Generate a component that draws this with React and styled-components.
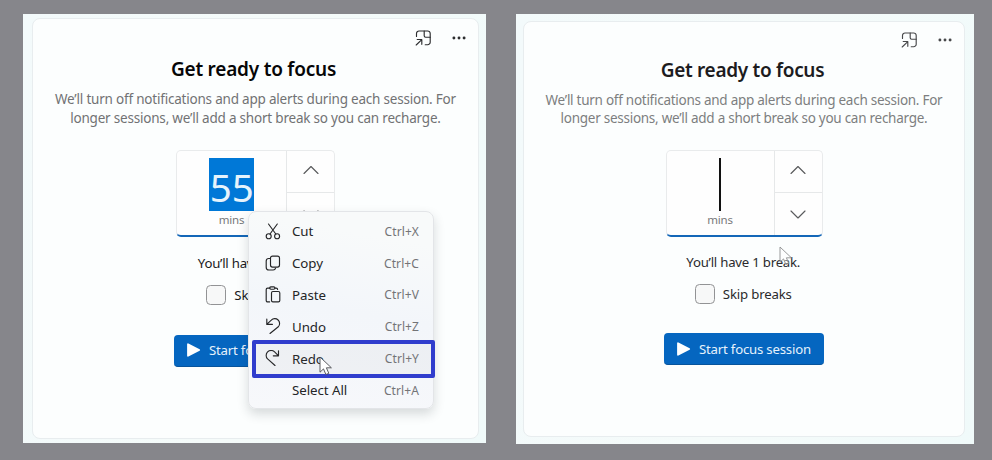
import React from "react";
import styled, { createGlobalStyle, css } from "styled-components";

const GlobalStyle = createGlobalStyle`
  *, *::before, *::after { box-sizing: border-box; }
  body { margin: 0; background: #86868b; }
`;

const Stage = styled.main`
  position: relative;
  display: flex;
  align-items: flex-start;
  gap: 30px;
  width: 992px;
  height: 460px;
  padding: 14px 18px 0 23px;
  overflow: hidden;
  background: #86868b;
  font-family: "Noto Sans", "Open Sans", sans-serif;
`;

const Panel = styled.section`
  display: flex;
  background: linear-gradient(100deg, #f3fafb, #f5fbfa 50%, #f0fafa);
  ${({ $side }) =>
    $side === "left"
      ? css`
          width: 463px;
          height: 429px;
          padding: 4px 7px 4px 9px;
        `
      : css`
          width: 458px;
          height: 430px;
          padding: 6.5px 9px 7.5px 7px;
        `}
`;

const Card = styled.article`
  flex: 1;
  display: flex;
  flex-direction: column;
  align-items: center;
  border: 1.5px solid #e8edef;
  border-radius: 8px;
  background: #fcfefe;
  color: ${({ $soft }) => ($soft ? "#2a2a2c" : "#19191b")};
`;

const Toolbar = styled.div`
  align-self: stretch;
  display: flex;
  justify-content: flex-end;
  align-items: center;
  gap: 20px;
  height: ${({ $soft }) => ($soft ? 35 : 36)}px;
  padding: 2px 11px 0 0;
  color: ${({ $soft }) => ($soft ? "#48494b" : "#2c2d2f")};
`;

const Title = styled.h1`
  margin: ${({ $soft }) => ($soft ? "0 3px 0 0" : "1px 4px 0 0")};
  font-size: 19px;
  font-weight: 600;
  line-height: 26px;
  letter-spacing: ${({ $soft }) => ($soft ? "-0.31px" : "-0.22px")};
  color: ${({ $soft }) => ($soft ? "#1c1c1e" : "#060607")};
`;

const Description = styled.p`
  margin: 8px 0 0;
  font-size: 13.5px;
  line-height: 18.5px;
  letter-spacing: ${({ $soft }) => ($soft ? "-0.265px" : "-0.205px")};
  text-align: center;
  white-space: nowrap;
  color: ${({ $soft }) => ($soft ? "#7d7e80" : "#717274")};
`;

const Timer = styled.div`
  display: grid;
  grid-template-columns: 1fr 48px;
  width: ${({ $width }) => $width}px;
  height: 87px;
  margin-top: ${({ $top }) => $top}px;
  border: 1.5px solid #e9ebec;
  border-bottom: 2px solid #1467b8;
  border-radius: 5px;
  background: #fefefe;
`;

const Duration = styled.div`
  display: flex;
  flex-direction: column;
  align-items: center;
  padding-top: 7px;
`;

const Selection = styled.span`
  height: 53px;
  padding: 0 0 0 0.4px;
  background: #0078d7;
  color: #e6f3fc;
  font-size: 38.5px;
  font-weight: 400;
  line-height: 58px;
  letter-spacing: -0.2px;
`;

const Caret = styled.span`
  width: 2px;
  height: 53px;
  background: #111;
`;

const Unit = styled.span`
  font-size: 11.5px;
  line-height: 17px;
  letter-spacing: -0.2px;
  color: #77787a;
`;

const Steppers = styled.div`
  display: grid;
  grid-template-rows: 41px 1fr;
  border-left: 1px solid #e6e8e9;
`;

const Step = styled.div`
  display: grid;
  place-items: center;
  padding-bottom: 3px;
  color: #5a5b5d;
  & + & {
    padding-bottom: 0;
    border-top: 1px solid #e6e8e9;
  }
`;

const BreakNote = styled.p`
  margin: ${({ $top }) => $top}px 1.5px 0 0;
  font-size: 13.2px;
  line-height: 20px;
  letter-spacing: -0.22px;
`;

const SkipRow = styled.label`
  display: flex;
  align-items: center;
  gap: 8px;
  margin: 12px 1.5px 0 0;
  font-size: 13.2px;
  line-height: 20px;
  letter-spacing: -0.17px;
`;

const Checkbox = styled.span`
  width: 20px;
  height: 20px;
  border: 1px solid #929395;
  border-radius: 4.5px;
  background: #f7f8f8;
`;

const StartButton = styled.div`
  display: flex;
  align-items: center;
  gap: 8px;
  width: ${({ $width }) => $width}px;
  height: 32px;
  margin-top: ${({ $top }) => $top}px;
  padding-left: 12px;
  border-radius: 4px;
  border-bottom: 1px solid #07549c;
  background: #0566c0;
  color: #e6f2fc;
  font-size: 13.2px;
  line-height: 20px;
  letter-spacing: -0.2px;
  white-space: nowrap;
`;

const Menu = styled.ul`
  position: absolute;
  left: 248px;
  top: 211px;
  width: 186px;
  height: 198px;
  margin: 0;
  padding: 3.5px 0;
  list-style: none;
  border: 1px solid #e3e5e8;
  border-radius: 8px;
  background: linear-gradient(190deg, #f8fafa 15%, #f3f6fa 50%, #f7f8fb);
  box-shadow: 0 5px 11px rgba(30, 40, 50, 0.17);
`;

const MenuItem = styled.li`
  display: grid;
  grid-template-columns: 27px 1fr auto;
  align-items: center;
  height: 31.8px;
  padding: 0 14px 0 16px;
  color: #242527;
  font-size: 13.3px;
  line-height: 20px;
  letter-spacing: -0.06px;
`;

const Shortcut = styled.span`
  font-size: 12px;
  line-height: 21px;
  letter-spacing: 0.1px;
  color: #737477;
`;

const Highlight = styled.div`
  position: absolute;
  left: 252px;
  top: 340px;
  width: 183px;
  height: 38px;
  border: 4px solid #303dcd;
  border-radius: 2px;
  background: rgba(120, 120, 125, 0.05);
`;

const Cursor = styled.svg`
  position: absolute;
  left: ${({ $x }) => $x}px;
  top: ${({ $y }) => $y}px;
`;

const Line = styled.svg.attrs({ fill: "none", stroke: "currentColor" })`
  display: block;
  stroke-linecap: round;
  stroke-linejoin: round;
  stroke-width: 1.15;
`;

const PopOutIcon = () => (
  <Line width="16" height="16" viewBox="0 0 16 16">
    <path d="M1.5 6.5V3.5a2.5 2.5 0 0 1 2.5-2.5h8.7a2.5 2.5 0 0 1 2.5 2.5v8.7a2.5 2.5 0 0 1-2.5 2.5H10.2" />
    <path d="M9.2 1v4.8a1.4 1.4 0 0 0 1.4 1.4h4.6M1.2 15l5.6-5.3M2.2 9.5h4.6v4.8" />
  </Line>
);

const MoreIcon = () => (
  <svg width="16" height="16" viewBox="0 0 16 16" fill="currentColor">
    <circle cx="2.9" cy="8" r="1.45" />
    <circle cx="8" cy="8" r="1.45" />
    <circle cx="13.1" cy="8" r="1.45" />
  </svg>
);

const Chevron = ({ down }) => (
  <Line width="18" height="12" viewBox="0 0 18 12">
    <path d={down ? "M2 3 9 10l7-7" : "M2 9.5 9 2.5l7 7"} />
  </Line>
);

const PlayIcon = () => (
  <svg width="15" height="16" viewBox="0 0 15 16">
    <path d="M2 2.2v11.6L13.2 8Z" fill="#fff" stroke="#fff" strokeWidth="1.8" strokeLinejoin="round" />
  </svg>
);

const menuIcons = {
  cut: (
    <>
      <circle cx="3.7" cy="13.2" r="2.5" />
      <circle cx="12.1" cy="13.2" r="2.5" />
      <path d="M3.5 1 10.8 11M12.3 1 5 11" />
    </>
  ),
  copy: (
    <>
      <rect x="5.5" y="1.1" width="9" height="11" rx="2" />
      <path d="M5.3 3.5H3.6A2.4 2.4 0 0 0 1.2 5.9v6.3a2.8 2.8 0 0 0 2.8 2.8h4.2a2.5 2.5 0 0 0 2.4-1.8" />
    </>
  ),
  paste: (
    <>
      <path d="M5 2.1H2.6a1.4 1.4 0 0 0-1.4 1.4v11a1.4 1.4 0 0 0 1.4 1.4h2M10 2.1h1.2a1.4 1.4 0 0 1 1.4 1.4" />
      <rect x="4.7" y="0.9" width="5.2" height="2.3" rx="1.1" />
      <rect x="6.5" y="5.5" width="8.3" height="10.4" rx="1.4" />
    </>
  ),
  undo: <path d="M1.8 1v5.4h5.6M2 6.2l4.3-4a4.8 4.8 0 0 1 7 6.6L5 15.5" />,
  redo: <path d="M13.5 0.8v5H8.3M13.3 5.6 9.6 1.9a4.9 4.9 0 0 0-7 7L10 15.5" />,
};

const MenuIcon = ({ name }) => (
  <Line width="16" height="17" viewBox="0 0 16 17">{menuIcons[name]}</Line>
);

const menuItems = [
  ["cut", "Cut", "Ctrl+X"],
  ["copy", "Copy", "Ctrl+C"],
  ["paste", "Paste", "Ctrl+V"],
  ["undo", "Undo", "Ctrl+Z"],
  ["redo", "Redo", "Ctrl+Y"],
  [null, "Select All", "Ctrl+A"],
];

const Pointer = ({ x, y, faded }) => (
  <Cursor $x={x} $y={y} width="14" height="21" viewBox="0 0 14 21">
    <path
      d="M1 1v15.2l3.5-3.3 2.4 5.6 2.9-1.2-2.4-5.5h5Z"
      fill={faded ? "rgba(255,255,255,0.4)" : "#fff"}
      stroke={faded ? "#8d8e90" : "#4b4c50"}
      strokeWidth="0.9"
      strokeLinejoin="round"
    />
  </Cursor>
);

function FocusPanel({ side, minutes }) {
  const left = side === "left";
  return (
    <Panel $side={side}>
      <Card $soft={!left}>
        <Toolbar $soft={!left}>
          <PopOutIcon />
          <MoreIcon />
        </Toolbar>
        <Title $soft={!left}>Get ready to focus</Title>
        <Description $soft={!left}>
          We’ll turn off notifications and app alerts during each session. For
          <br />
          longer sessions, we’ll add a short break so you can recharge.
        </Description>
        <Timer $width={left ? 159 : 157} $top={left ? 23 : 22.5}>
          <Duration>
            {minutes ? <Selection>{minutes}</Selection> : <Caret />}
            <Unit>mins</Unit>
          </Duration>
          <Steppers>
            <Step><Chevron /></Step>
            <Step><Chevron down /></Step>
          </Steppers>
        </Timer>
        <BreakNote $top={left ? 15.5 : 15}>You’ll have 1 break.</BreakNote>
        <SkipRow>
          <Checkbox />
          Skip breaks
        </SkipRow>
        <StartButton $width={left ? 163 : 160} $top={left ? 30 : 29}>
          <PlayIcon />
          Start focus session
        </StartButton>
      </Card>
    </Panel>
  );
}

export default function App() {
  return (
    <>
      <GlobalStyle />
      <Stage>
        <FocusPanel side="left" minutes="55" />
        <FocusPanel side="right" />
        <Menu>
          {menuItems.map(([icon, label, keys]) => (
            <MenuItem key={label}>
              {icon ? <MenuIcon name={icon} /> : <span />}
              <span>{label}</span>
              <Shortcut>{keys}</Shortcut>
            </MenuItem>
          ))}
        </Menu>
        <Highlight />
        <Pointer x={318.5} y={356} />
        <Pointer x={778.5} y={245.5} faded />
      </Stage>
    </>
  );
}
